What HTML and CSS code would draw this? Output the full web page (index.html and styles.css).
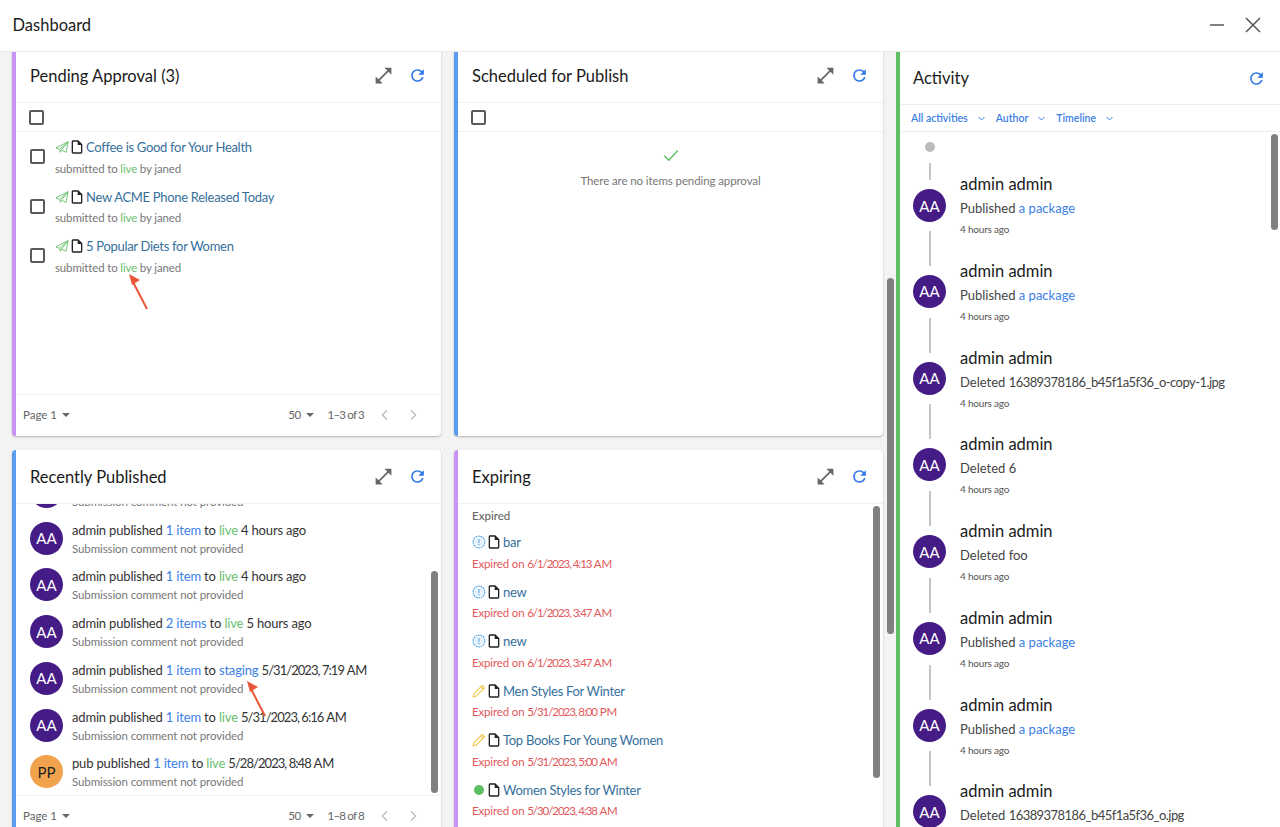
FILE: index.html
```html
<!DOCTYPE html>
<html lang="en">
<head>
  <meta charset="UTF-8" />
  <meta name="viewport" content="width=device-width, initial-scale=1.0" />
  <title>Dashboard</title>
  <link rel="stylesheet" href="styles.css">
</head>
<body>
  <svg class="sprite" xmlns="http://www.w3.org/2000/svg">
    <symbol id="i-expand" viewBox="0 0 24 24"><path d="M21 11V3h-8l3.29 3.29-10 10L3 13v8h8l-3.29-3.29 10-10z" fill="currentColor"/></symbol>
    <symbol id="i-refresh" viewBox="0 0 24 24"><path d="M17.65 6.35C16.2 4.9 14.21 4 12 4c-4.42 0-7.99 3.58-7.99 8s3.57 8 7.99 8c3.73 0 6.84-2.55 7.73-6h-2.08c-.82 2.33-3.04 4-5.65 4-3.31 0-6-2.69-6-6s2.69-6 6-6c1.66 0 3.14.69 4.22 1.78L13 11h7V4l-2.35 2.35z" fill="currentColor"/></symbol>
    <symbol id="i-doc" viewBox="0 0 24 24"><path d="M14 2H6c-1.1 0-1.99.9-1.99 2L4 20c0 1.1.89 2 1.99 2H18c1.1 0 2-.9 2-2V8l-6-6zM6 20V4h7v5h5v11H6z" fill="currentColor"/></symbol>
    <symbol id="i-plane" viewBox="0 0 24 24"><path d="M22.5 3 1.5 13.5l6.5 2.5 L22.5 3 11 17.5 19 21z M8 16l1 5 2-3.5" fill="none" stroke="currentColor" stroke-width="1.6" stroke-linejoin="round"/></symbol>
    <symbol id="i-badge" viewBox="0 0 24 24"><circle cx="12" cy="12" r="10" fill="none" stroke="currentColor" stroke-width="2" stroke-dasharray="3.4 1"/><circle cx="12" cy="12" r="7" fill="#e4f1fc"/><path d="M12 7v6.5M12 15.5v2" fill="none" stroke="currentColor" stroke-width="1.8"/></symbol>
    <symbol id="i-pencil" viewBox="0 0 24 24"><path d="M2 22l1.5-5.5L17.5 2.5l4 4L7.500 20.500z M15 5l4 4" fill="none" stroke="currentColor" stroke-width="2" stroke-linejoin="round"/></symbol>
    <symbol id="i-left" viewBox="0 0 24 24"><path d="M15.500 4 7.500 12l8 8" fill="none" stroke="currentColor" stroke-width="1.800"/></symbol>
    <symbol id="i-right" viewBox="0 0 24 24"><path d="M8.500 4l8 8-8 8" fill="none" stroke="currentColor" stroke-width="1.800"/></symbol>
    <symbol id="i-chevron" viewBox="0 0 24 24"><path d="M4 8l8 8 8-8" fill="none" stroke="currentColor" stroke-width="2.600"/></symbol>
  </svg>

  <header class="topbar">
    <h1 class="topbar-title">Dashboard</h1>
    <div class="topbar-actions">
      <svg class="win-icon" viewBox="0 0 24 24"><path d="M5 12h14" fill="none" stroke="currentColor" stroke-width="1.500"/></svg>
      <svg class="win-icon" viewBox="0 0 24 24"><path d="M5 5l14 14M19 5 5 19" fill="none" stroke="currentColor" stroke-width="1.500"/></svg>
    </div>
  </header>

  <div class="layout">
    <main class="board">
      <section class="card accent-purple">
        <div class="card-head">
          <h2 class="card-title">Pending Approval (3)</h2>
          <svg class="tool expand"><use href="#i-expand"/></svg>
          <svg class="tool refresh"><use href="#i-refresh"/></svg>
        </div>
        <div class="select-row"><span class="checkbox"></span></div>
        <div class="card-body">
          <div class="pending-row">
            <span class="checkbox"></span>
            <div class="item">
              <div class="item-title"><svg class="status plane"><use href="#i-plane"/></svg><svg class="doc"><use href="#i-doc"/></svg><a class="item-link">Coffee is Good for Your Health</a></div>
              <div class="item-sub">submitted to <span class="env-live">live</span> by janed</div>
            </div>
          </div>
          <div class="pending-row">
            <span class="checkbox"></span>
            <div class="item">
              <div class="item-title"><svg class="status plane"><use href="#i-plane"/></svg><svg class="doc"><use href="#i-doc"/></svg><a class="item-link">New ACME Phone Released Today</a></div>
              <div class="item-sub">submitted to <span class="env-live">live</span> by janed</div>
            </div>
          </div>
          <div class="pending-row">
            <span class="checkbox"></span>
            <div class="item">
              <div class="item-title"><svg class="status plane"><use href="#i-plane"/></svg><svg class="doc"><use href="#i-doc"/></svg><a class="item-link">5 Popular Diets for Women</a></div>
              <div class="item-sub">submitted to <span class="env-live">live</span> by janed</div>
            </div>
          </div>
        </div>
        <div class="card-foot">
          <span>Page 1</span><span class="caret"></span>
          <span class="foot-size">50</span><span class="caret"></span>
          <span class="foot-range">1–3 of 3</span>
          <svg class="page-btn"><use href="#i-left"/></svg>
          <svg class="page-btn"><use href="#i-right"/></svg>
        </div>
      </section>

      <section class="card accent-blue">
        <div class="card-head">
          <h2 class="card-title">Scheduled for Publish</h2>
          <svg class="tool expand"><use href="#i-expand"/></svg>
          <svg class="tool refresh"><use href="#i-refresh"/></svg>
        </div>
        <div class="select-row"><span class="checkbox"></span></div>
        <div class="card-body empty">
          <svg class="empty-check" viewBox="0 0 24 24"><path d="M3 13l6 6L21 6" fill="none" stroke="currentColor" stroke-width="1.800"/></svg>
          <p class="empty-text">There are no items pending approval</p>
        </div>
      </section>

      <section class="card accent-blue">
        <div class="card-head">
          <h2 class="card-title">Recently Published</h2>
          <svg class="tool expand"><use href="#i-expand"/></svg>
          <svg class="tool refresh"><use href="#i-refresh"/></svg>
        </div>
        <div class="card-body clip">
          <div class="published">
            <div class="pub-row"><span class="avatar">AA</span><div class="pub-text"><div class="pub-line">admin published <a class="link">1 item</a> to <span class="env-live">live</span> 4 hours ago</div><div class="pub-note">Submission comment not provided</div></div></div>
            <div class="pub-row"><span class="avatar">AA</span><div class="pub-text"><div class="pub-line">admin published <a class="link">1 item</a> to <span class="env-live">live</span> 4 hours ago</div><div class="pub-note">Submission comment not provided</div></div></div>
            <div class="pub-row"><span class="avatar">AA</span><div class="pub-text"><div class="pub-line">admin published <a class="link">1 item</a> to <span class="env-live">live</span> 4 hours ago</div><div class="pub-note">Submission comment not provided</div></div></div>
            <div class="pub-row"><span class="avatar">AA</span><div class="pub-text"><div class="pub-line">admin published <a class="link">2 items</a> to <span class="env-live">live</span> 5 hours ago</div><div class="pub-note">Submission comment not provided</div></div></div>
            <div class="pub-row"><span class="avatar">AA</span><div class="pub-text"><div class="pub-line">admin published <a class="link">1 item</a> to <a class="link">staging</a> <span class="digits">5/31/2023, 7:19</span> AM</div><div class="pub-note">Submission comment not provided</div></div></div>
            <div class="pub-row"><span class="avatar">AA</span><div class="pub-text"><div class="pub-line">admin published <a class="link">1 item</a> to <span class="env-live">live</span> <span class="digits">5/31/2023, 6:16</span> AM</div><div class="pub-note">Submission comment not provided</div></div></div>
            <div class="pub-row"><span class="avatar orange">PP</span><div class="pub-text"><div class="pub-line">pub published <a class="link">1 item</a> to <span class="env-live">live</span> <span class="digits">5/28/2023, 8:48</span> AM</div><div class="pub-note">Submission comment not provided</div></div></div>
          </div>
          <span class="thumb thumb-published"></span>
        </div>
        <div class="card-foot">
          <span>Page 1</span><span class="caret"></span>
          <span class="foot-size">50</span><span class="caret"></span>
          <span class="foot-range">1–8 of 8</span>
          <svg class="page-btn"><use href="#i-left"/></svg>
          <svg class="page-btn"><use href="#i-right"/></svg>
        </div>
      </section>

      <section class="card accent-purple">
        <div class="card-head">
          <h2 class="card-title">Expiring</h2>
          <svg class="tool expand"><use href="#i-expand"/></svg>
          <svg class="tool refresh"><use href="#i-refresh"/></svg>
        </div>
        <div class="card-body expiring">
          <div class="group-label">Expired</div>
          <div class="item exp-row">
            <div class="item-title"><svg class="status badge"><use href="#i-badge"/></svg><svg class="doc"><use href="#i-doc"/></svg><a class="item-link">bar</a></div>
            <div class="item-sub expired">Expired on <span class="digits">6/1/2023, 4:13</span> AM</div>
          </div>
          <div class="item exp-row">
            <div class="item-title"><svg class="status badge"><use href="#i-badge"/></svg><svg class="doc"><use href="#i-doc"/></svg><a class="item-link">new</a></div>
            <div class="item-sub expired">Expired on <span class="digits">6/1/2023, 3:47</span> AM</div>
          </div>
          <div class="item exp-row">
            <div class="item-title"><svg class="status badge"><use href="#i-badge"/></svg><svg class="doc"><use href="#i-doc"/></svg><a class="item-link">new</a></div>
            <div class="item-sub expired">Expired on <span class="digits">6/1/2023, 3:47</span> AM</div>
          </div>
          <div class="item exp-row">
            <div class="item-title"><svg class="status pencil"><use href="#i-pencil"/></svg><svg class="doc"><use href="#i-doc"/></svg><a class="item-link">Men Styles For Winter</a></div>
            <div class="item-sub expired">Expired on <span class="digits">5/31/2023, 8:00</span> PM</div>
          </div>
          <div class="item exp-row">
            <div class="item-title"><svg class="status pencil"><use href="#i-pencil"/></svg><svg class="doc"><use href="#i-doc"/></svg><a class="item-link">Top Books For Young Women</a></div>
            <div class="item-sub expired">Expired on <span class="digits">5/31/2023, 5:00</span> AM</div>
          </div>
          <div class="item exp-row">
            <div class="item-title"><span class="status dot"></span><svg class="doc"><use href="#i-doc"/></svg><a class="item-link">Women Styles for Winter</a></div>
            <div class="item-sub expired">Expired on <span class="digits">5/30/2023, 4:38</span> AM</div>
          </div>
          <span class="thumb thumb-expiring"></span>
        </div>
      </section>
    </main>

    <span class="thumb thumb-board"></span>

    <aside class="activity">
      <div class="activity-head">
        <h2 class="card-title">Activity</h2>
        <svg class="tool refresh"><use href="#i-refresh"/></svg>
      </div>
      <div class="filters">
        <span class="filter">All activities</span><svg class="filter-chev"><use href="#i-chevron"/></svg>
        <span class="filter">Author</span><svg class="filter-chev"><use href="#i-chevron"/></svg>
        <span class="filter">Timeline</span><svg class="filter-chev"><use href="#i-chevron"/></svg>
      </div>
      <div class="feed">
        <div class="feed-row first">
          <div class="rail"><span class="rail-dot"></span><span class="rail-line"></span><span class="avatar">AA</span></div>
          <div><div class="feed-name">admin admin</div><div class="feed-text">Published <a class="link">a package</a></div><div class="feed-time">4 hours ago</div></div>
        </div>
        <div class="feed-row">
          <div class="rail"><span class="rail-line"></span><span class="avatar">AA</span></div>
          <div><div class="feed-name">admin admin</div><div class="feed-text">Published <a class="link">a package</a></div><div class="feed-time">4 hours ago</div></div>
        </div>
        <div class="feed-row">
          <div class="rail"><span class="rail-line"></span><span class="avatar">AA</span></div>
          <div><div class="feed-name">admin admin</div><div class="feed-text">Deleted <span class="digits">16389378186_b45f1a5f36_o-copy-1.jpg</span></div><div class="feed-time">4 hours ago</div></div>
        </div>
        <div class="feed-row">
          <div class="rail"><span class="rail-line"></span><span class="avatar">AA</span></div>
          <div><div class="feed-name">admin admin</div><div class="feed-text">Deleted 6</div><div class="feed-time">4 hours ago</div></div>
        </div>
        <div class="feed-row">
          <div class="rail"><span class="rail-line"></span><span class="avatar">AA</span></div>
          <div><div class="feed-name">admin admin</div><div class="feed-text">Deleted foo</div><div class="feed-time">4 hours ago</div></div>
        </div>
        <div class="feed-row">
          <div class="rail"><span class="rail-line"></span><span class="avatar">AA</span></div>
          <div><div class="feed-name">admin admin</div><div class="feed-text">Published <a class="link">a package</a></div><div class="feed-time">4 hours ago</div></div>
        </div>
        <div class="feed-row">
          <div class="rail"><span class="rail-line"></span><span class="avatar">AA</span></div>
          <div><div class="feed-name">admin admin</div><div class="feed-text">Published <a class="link">a package</a></div><div class="feed-time">4 hours ago</div></div>
        </div>
        <div class="feed-row">
          <div class="rail"><span class="rail-line"></span><span class="avatar">AA</span></div>
          <div><div class="feed-name">admin admin</div><div class="feed-text">Deleted <span class="digits">16389378186_b45f1a5f36_o.jpg</span></div><div class="feed-time">4 hours ago</div></div>
        </div>
      </div>
      <span class="thumb thumb-activity"></span>
    </aside>
  </div>

  <svg class="callout callout-live" viewBox="0 0 24 38"><path d="M20 36 6 9" stroke="#e8573a" stroke-width="2" fill="none"/><path d="M2 1l11 6-8 5z" fill="#e8573a"/></svg>
  <svg class="callout callout-staging" viewBox="0 0 24 38"><path d="M20 36 6 9" stroke="#e8573a" stroke-width="2" fill="none"/><path d="M2 1l11 6-8 5z" fill="#e8573a"/></svg>
</body>
</html>
```

FILE: styles.css
```css
html, body {
  margin: 0;
  padding: 0;
  width: 100%;
  height: 100%;
  overflow: hidden;
  background-color: #f3f3f3;
}

body {
  font-family: Lato, "Noto Sans", sans-serif;
  color: #222;
  display: flex;
  flex-direction: column;
}

.sprite {
  display: none;
}

a {
  text-decoration: none;
}

.digits {
  letter-spacing: -0.55px;
}

.pub-line .digits {
  letter-spacing: -0.95px;
}

.expired .digits {
  letter-spacing: -1.05px;
}

.topbar {
  flex: none;
  height: 51px;
  padding: 0 13px 0 12.5px;
  display: flex;
  align-items: center;
  background: #fff;
  border-bottom: 1px solid #ececec;
  position: relative;
  z-index: 2;
}

.topbar-title {
  margin: 0 0 2px;
  font-size: 16.5px;
  font-weight: 400;
  color: #1c1c1c;
  flex: 1;
}

.topbar-actions {
  display: flex;
  gap: 12px;
  margin-right: 2px;
  margin-bottom: 1px;
}

.win-icon {
  width: 24px;
  height: 24px;
  color: #555;
}

.layout {
  flex: 1;
  min-height: 0;
  display: flex;
  position: relative;
}

.board {
  flex: none;
  width: 884px;
  margin-top: -3px;
  padding-left: 12px;
  box-sizing: border-box;
  display: grid;
  grid-template-columns: 429px 429px;
  grid-auto-rows: 387px;
  column-gap: 13px;
  row-gap: 14px;
}

.card {
  background: #fff;
  border-left: 4px solid #c48ff2;
  border-radius: 4px;
  box-shadow: 0 1px 2px rgba(0, 0, 0, 0.25);
  display: flex;
  flex-direction: column;
  box-sizing: border-box;
  min-height: 0;
}

.accent-purple { border-left-color: #c893f2; }
.accent-blue { border-left-color: #5b9bf0; }

.card-head {
  flex: none;
  height: 54px;
  box-sizing: border-box;
  padding: 0 14px;
  display: flex;
  align-items: center;
  border-bottom: 1px solid #f0f0f0;
}

.card-title {
  margin: 0;
  flex: 1;
  font-size: 16.5px;
  font-weight: 400;
  color: #1a1a1a;
}

.tool {
  width: 18px;
  height: 18px;
}

.expand {
  color: #666;
  width: 21px;
  height: 21px;
  margin-right: 14px;
}

.refresh {
  color: #2f78e8;
  width: 19px;
  height: 19px;
}

.select-row {
  flex: none;
  height: 29px;
  box-sizing: border-box;
  padding-left: 13px;
  display: flex;
  align-items: center;
  border-bottom: 1px solid #f0f0f0;
}

.checkbox {
  flex: none;
  width: 15px;
  height: 15px;
  box-sizing: border-box;
  border: 2px solid #5a5a5a;
  border-radius: 2px;
}

.card-body {
  flex: 1;
  min-height: 0;
  position: relative;
}

.pending-row {
  height: 49.5px;
  padding-left: 14px;
  box-sizing: border-box;
  display: flex;
  align-items: center;
  gap: 10px;
}

.item {
  padding-top: 5px;
  height: 49.5px;
  box-sizing: border-box;
}

.item-title {
  display: flex;
  align-items: center;
  height: 20px;
  font-size: 13px;
}

.status {
  flex: none;
  width: 14px;
  height: 14px;
}

.plane { color: #6cc070; }
.badge { color: #5aa9e6; }
.pencil { color: #f2c84b; }

.dot {
  width: 10px;
  height: 10px;
  margin: 0 2px;
  border-radius: 50%;
  background: #5cbf63;
}

.doc {
  flex: none;
  width: 16px;
  height: 16px;
  color: #222;
}

.item-link {
  color: #36709c;
  margin-left: 1px;
  letter-spacing: -0.3px;
}

.item-sub {
  margin-top: 1.5px;
  line-height: 20px;
  font-size: 11.5px;
  letter-spacing: -0.15px;
  color: #777;
}

.env-live { color: #6cc070; }
.link { color: #3a80e6; }

.expired {
  color: #e2585a;
}

.card-foot {
  flex: none;
  height: 42px;
  box-sizing: border-box;
  padding: 0 14px 2px 7px;
  display: flex;
  align-items: center;
  font-size: 11.5px;
  color: #666;
  border-top: 1px solid #f0f0f0;
}

.caret {
  width: 0;
  height: 0;
  margin-left: 5px;
  border-left: 4.5px solid transparent;
  border-right: 4.5px solid transparent;
  border-top: 4.5px solid #666;
}

.foot-size {
  margin-left: auto;
  letter-spacing: -0.55px;
}

.foot-range {
  margin: 0 7px 0 14px;
  letter-spacing: -0.8px;
}

.page-btn {
  width: 14px;
  height: 14px;
  color: #aaa;
  margin: 0 7px;
}

.empty {
  display: flex;
  flex-direction: column;
  align-items: center;
  padding-top: 14px;
}

.empty-check {
  width: 18px;
  height: 18px;
  color: #5cbf63;
}

.empty-text {
  margin: 7px 0 0;
  font-size: 11.5px;
  letter-spacing: -0.1px;
  line-height: 20px;
  color: #777;
}

.clip {
  overflow: hidden;
}

.published {
  margin-top: -36px;
  padding-left: 14px;
}

.pub-row {
  height: 46.75px;
  display: flex;
  align-items: center;
  gap: 9px;
}

.pub-text {
  padding-top: 2px;
}

.avatar {
  flex: none;
  width: 33px;
  height: 33px;
  border-radius: 50%;
  background: #451c86;
  color: #fff;
  font-size: 15px;
  display: flex;
  align-items: center;
  justify-content: center;
}

.orange {
  background: #f0a24c;
  color: #222;
}

.pub-line {
  font-size: 13px;
  letter-spacing: -0.17px;
  line-height: 19px;
  color: #333;
}

.pub-note {
  margin-top: -1px;
  font-size: 11.5px;
  letter-spacing: -0.1px;
  line-height: 19px;
  color: #777;
}

.expiring {
  padding: 2px 0 0 14px;
  overflow: hidden;
}

.group-label {
  height: 20px;
  line-height: 20px;
  font-size: 11.5px;
  font-weight: 500;
  color: #666;
  margin-bottom: 1px;
}

.thumb {
  position: absolute;
  width: 7px;
  background: #808080;
  border-radius: 4px;
}

.thumb-published {
  right: 3px;
  top: 67px;
  height: 222px;
}

.thumb-expiring {
  right: 3px;
  top: 2px;
  height: 272px;
}

.thumb-board {
  left: 887px;
  top: 226px;
  height: 356px;
}

.thumb-activity {
  right: 2px;
  top: 82px;
  height: 96px;
}

.activity {
  flex: 1;
  position: relative;
  background: #fff;
  border-left: 4px solid #5fbf63;
  margin-left: 12px;
  min-width: 0;
}

.activity-head {
  height: 53px;
  box-sizing: border-box;
  padding: 0 14px 0 13px;
  display: flex;
  align-items: center;
  border-bottom: 1px solid #eee;
}

.filters {
  height: 26px;
  padding-left: 11px;
  display: flex;
  align-items: center;
  border-bottom: 1px solid #eee;
}

.filter {
  font-size: 10.5px;
  font-weight: 600;
  color: #3a80e6;
}

.filter-chev {
  width: 9px;
  height: 9px;
  color: #3a80e6;
  margin: 0 10px 0 9px;
}

.feed {
  padding: 12px 0 0 13px;
}

.feed-row {
  height: 86.75px;
  display: flex;
  gap: 14px;
}

.rail {
  flex: none;
  width: 33px;
  display: flex;
  flex-direction: column;
  align-items: center;
}

.rail-line {
  width: 2px;
  height: 35px;
  margin-bottom: 9px;
  background: #c4c4c4;
}

.rail-dot {
  width: 10px;
  height: 10px;
  margin-top: -2px;
  margin-bottom: 11px;
  border-radius: 50%;
  background: #bbb;
}

.first .rail-line {
  height: 17px;
}

.feed-name {
  margin-top: 29px;
  font-size: 16.5px;
  line-height: 22px;
  color: #1a1a1a;
}

.feed-text {
  margin-top: 3px;
  font-size: 13px;
  line-height: 20px;
  color: #444;
}

.feed-time {
  margin-top: 2px;
  font-size: 10px;
  letter-spacing: -0.2px;
  line-height: 18px;
  color: #555;
}

.callout {
  position: absolute;
  width: 24px;
  height: 38px;
  z-index: 3;
}

.callout-live {
  left: 127px;
  top: 273px;
}

.callout-staging {
  left: 245px;
  top: 680px;
}
```
